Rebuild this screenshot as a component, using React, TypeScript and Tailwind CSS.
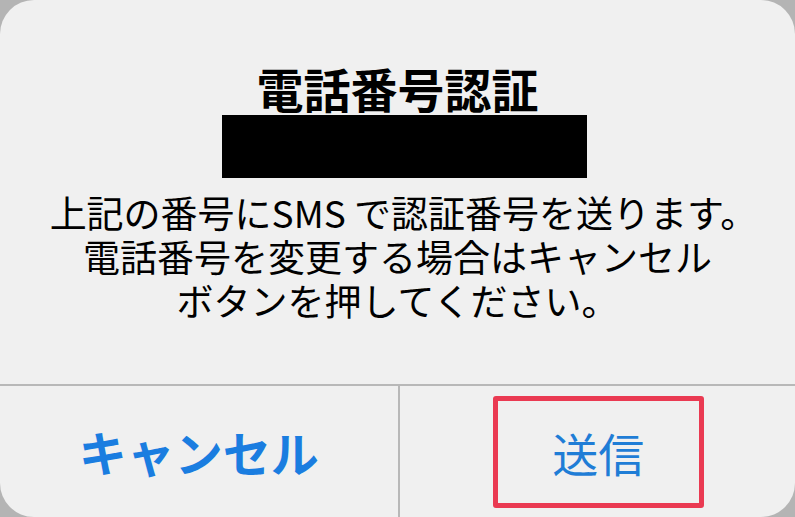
export default function App() {
  return (
    <div
      className="w-[795px] h-[517px] bg-[#b4b4b4] overflow-hidden"
      style={{ fontFamily: '"Noto Sans CJK JP", "Noto Sans", sans-serif' }}
    >
      <div className="h-full rounded-[34px] bg-[#f0f0f0] flex flex-col">
        {/* message */}
        <div className="h-[384px] flex flex-col items-center pt-[64px]">
          <h1 className="text-[47px] leading-[47px] font-bold text-black">電話番号認証</h1>
          <div className="mt-[4px] ml-[14px] w-[365px] h-[63px] bg-black" />
          <div className="mt-[12px] flex flex-col items-center text-[37px] leading-[44px] text-black">
            <p className="ml-[12px]">上記の番号にSMS で認証番号を送ります。</p>
            <p>電話番号を変更する場合はキャンセル</p>
            <p>ボタンを押してください。</p>
          </div>
        </div>

        {/* actions */}
        <div className="flex-1 grid grid-cols-2 border-t-2 border-[#b8b8b8]">
          <button className="flex items-center justify-center pb-[2px] text-[48px] font-bold text-[#1a7de0]">
            キャンセル
          </button>
          <div className="flex items-center justify-center border-l-2 border-[#b8b8b8] pl-[2px]">
            <div className="w-[211px] h-[112px] mt-[1px] border-[5px] border-[#ea3a52] rounded-[3px] flex items-center justify-center">
              <button className="text-[46px] text-[#1f7dd6]">送信</button>
            </div>
          </div>
        </div>
      </div>
    </div>
  )
}
